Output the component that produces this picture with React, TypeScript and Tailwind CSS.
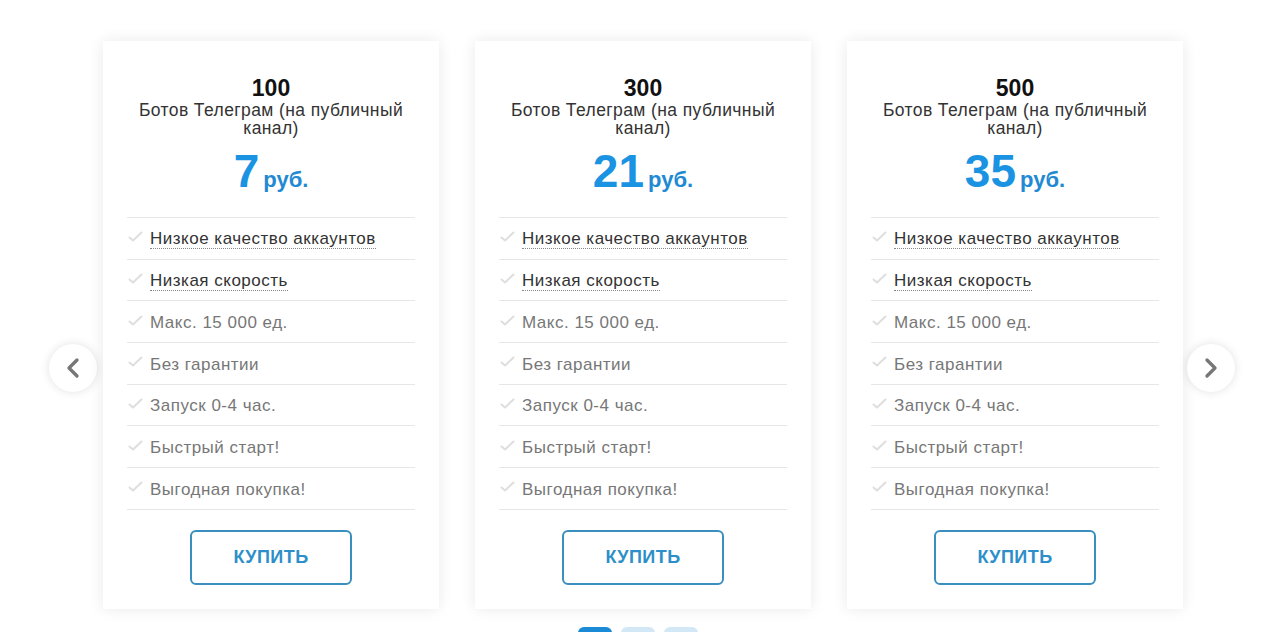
import { ChevronLeft, ChevronRight } from 'lucide-react';

const plans = [
  { count: '100', price: '7' },
  { count: '300', price: '21' },
  { count: '500', price: '35' },
];

const features = [
  { text: 'Низкое качество аккаунтов', hint: true },
  { text: 'Низкая скорость', hint: true },
  { text: 'Макс. 15 000 ед.', hint: false },
  { text: 'Без гарантии', hint: false },
  { text: 'Запуск 0-4 час.', hint: false },
  { text: 'Быстрый старт!', hint: false },
  { text: 'Выгодная покупка!', hint: false },
];

function Check() {
  return (
    <svg width="15" height="12" viewBox="0 0 15 12" className="shrink-0 -mt-1">
      <path d="M1.5 6.5 L5 9.5 L13.5 1.5" fill="none" stroke="#dedede" strokeWidth="2" strokeLinecap="round" strokeLinejoin="round" />
    </svg>
  );
}

function PlanCard({ count, price }: { count: string; price: string }) {
  return (
    <div className="w-[336px] bg-white shadow-[0_0_14px_rgba(0,0,0,0.09)] px-6 pt-[35px] pb-6 flex flex-col items-center">
      <div className="text-[23px] leading-6 font-bold text-[#111]">{count}</div>
      <div className="text-[17.5px] leading-[18px] tracking-[0.4px] text-[#333] text-center mt-px">
        Ботов Телеграм (на публичный канал)
      </div>
      <div className="flex items-baseline gap-1 mt-[10px] h-[48px]">
        <span className="text-[46px] leading-[48px] font-bold text-[#1b93e3]">{price}</span>
        <span className="text-[22px] font-bold text-[#2289d2]">руб.</span>
      </div>
      <ul className="w-full mt-[22px] border-t border-[#e6e6e6]">
        {features.map((f) => (
          <li key={f.text} className="h-[41.7px] pt-[2px] border-b border-[#e6e6e6] flex items-center gap-[7px] pl-px">
            <Check />
            {f.hint ? (
              <span className="text-[17px] tracking-[0.5px] text-[#333] border-b border-dotted border-[#888] leading-[19px]">
                {f.text}
              </span>
            ) : (
              <span className="text-[17px] tracking-[0.5px] text-[#777]">{f.text}</span>
            )}
          </li>
        ))}
      </ul>
      <button className="mt-5 w-[162px] h-[55px] border-2 border-[#3a8fbf] rounded-md text-[18px] font-bold text-[#2c8fc9] tracking-wide">
        КУПИТЬ
      </button>
    </div>
  );
}

function Arrow({ dir }: { dir: 'left' | 'right' }) {
  return (
    <button className="w-12 h-12 rounded-full bg-white shadow-[0_0_10px_rgba(0,0,0,0.12)] flex items-center justify-center shrink-0">
      {dir === 'left' ? (
        <ChevronLeft className="w-8 h-8 text-[#777]" strokeWidth={2.5} />
      ) : (
        <ChevronRight className="w-8 h-8 text-[#777]" strokeWidth={2.5} />
      )}
    </button>
  );
}

export default function App() {
  return (
    <div className="h-[632px] w-[1280px] overflow-hidden bg-white flex flex-col font-['Liberation_Sans',Arial,sans-serif]">
      <div className="ml-[525px] w-[268px] h-[2px] bg-[#86b8d0]" />

      <div className="flex items-start mt-[41px] pl-[49px]">
        <div className="mt-[303px]">
          <Arrow dir="left" />
        </div>
        <div className="flex gap-9 ml-[6px]">
          {plans.map((p) => (
            <PlanCard key={p.count} count={p.count} price={p.price} />
          ))}
        </div>
        <div className="ml-1 mt-[303px]">
          <Arrow dir="right" />
        </div>
      </div>

      <div className="flex gap-[9px] ml-[578px] mt-[18px]">
        <div className="w-[34px] h-3 rounded-md bg-[#1a8ad6]" />
        <div className="w-[34px] h-3 rounded-md bg-[#d3e8f6]" />
        <div className="w-[34px] h-3 rounded-md bg-[#d3e8f6]" />
      </div>
    </div>
  );
}
